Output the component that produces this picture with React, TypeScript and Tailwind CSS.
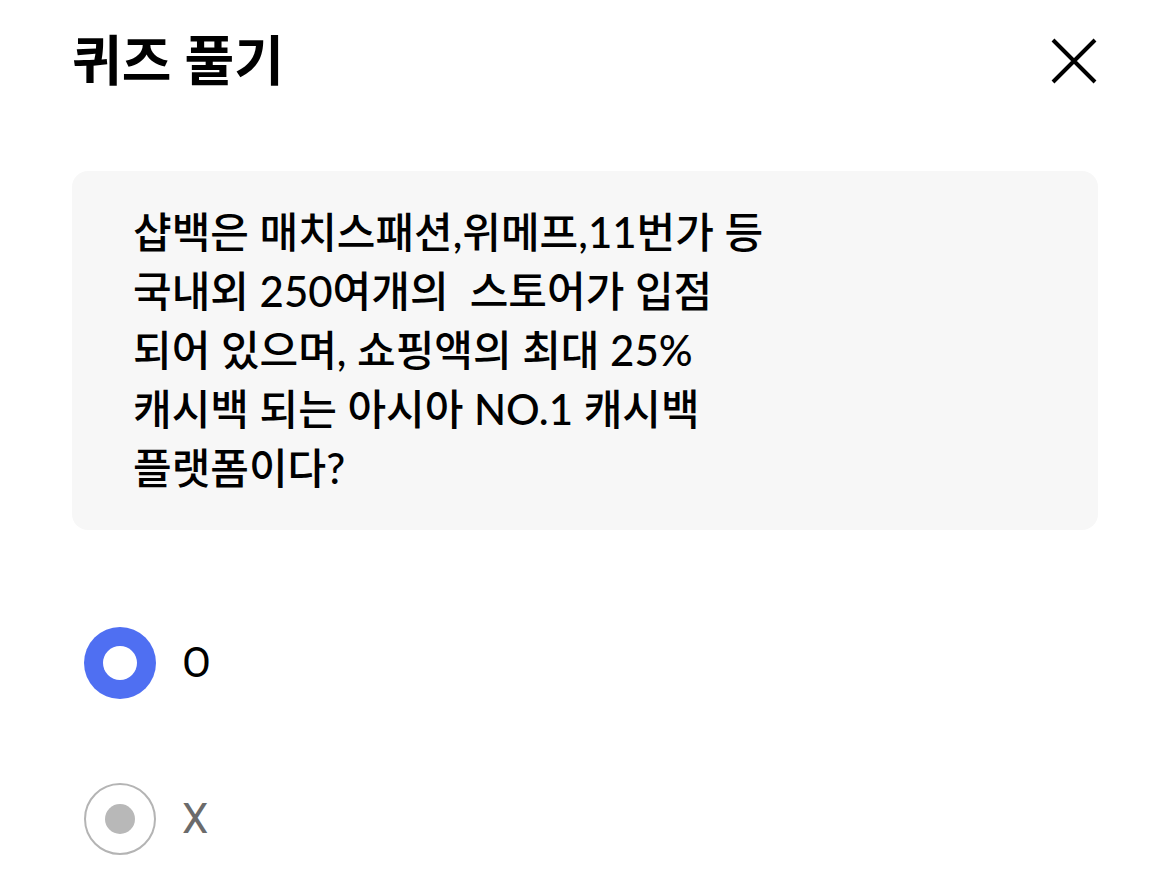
import React, { useState } from "react";

/* ---------------------------------------------------------
 * 퀴즈 풀기 – 문제 한 개와 O/X 선택지
 * --------------------------------------------------------- */
const QUESTION = [
  "샵백은 매치스패션,위메프,11번가 등",
  "국내외 250여개의  스토어가 입점",
  "되어 있으며, 쇼핑액의 최대 25%",
  "캐시백 되는 아시아 NO.1 캐시백",
  "플랫폼이다?",
];

const OPTIONS = ["O", "X"];

function CloseIcon() {
  return (
    <svg width="46" height="46" viewBox="0 0 46 46" fill="none" aria-hidden>
      <path d="M2 2L44 44M44 2L2 44" stroke="#000" strokeWidth="4" />
    </svg>
  );
}

type RadioProps = {
  label: string;
  checked: boolean;
  onSelect: () => void;
};

function RadioRow({ label, checked, onSelect }: RadioProps) {
  return (
    <button
      type="button"
      onClick={onSelect}
      className="flex items-center gap-[26px] h-[72px] text-left"
      role="radio"
      aria-checked={checked}
    >
      {checked ? (
        <span className="w-[72px] h-[72px] rounded-full bg-[#4f6ff2] flex items-center justify-center shrink-0">
          <span className="w-[34px] h-[34px] rounded-full bg-white" />
        </span>
      ) : (
        <span className="w-[72px] h-[72px] rounded-full border-2 border-[#b4b4b4] flex items-center justify-center shrink-0">
          <span className="w-[30px] h-[30px] rounded-full bg-[#b8b8b8]" />
        </span>
      )}
      <span
        className={`text-[42px] leading-none font-['Roboto',sans-serif] ${
          checked ? "text-black" : "text-[#6b6b6b]"
        }`}
      >
        {label}
      </span>
    </button>
  );
}

export default function App() {
  const [selected, setSelected] = useState(0);

  return (
    <div className="w-[1170px] h-[879px] bg-white overflow-hidden font-['Lato','Noto_Sans_CJK_KR',sans-serif]">
      {/* ----- HEADER ----- */}
      <div className="h-[122px] pl-[72px] pr-[73px] flex items-center justify-between">
        <h1 className="text-[54px] font-bold text-black leading-none">퀴즈 풀기</h1>
        <button type="button" aria-label="닫기" className="w-[46px] h-[46px]">
          <CloseIcon />
        </button>
      </div>

      {/* ----- QUESTION ----- */}
      <div className="mt-[49px] mx-[72px] rounded-2xl bg-[#f7f7f7] pl-[61px] py-8">
        {QUESTION.map((line, i) => (
          <p key={i} className="text-[42px] leading-[59px] font-medium text-black whitespace-pre">
            {line}
          </p>
        ))}
      </div>

      {/* ----- OPTIONS ----- */}
      <div className="mt-[97px] pl-[84px] flex flex-col gap-[84px]" role="radiogroup">
        {OPTIONS.map((opt, i) => (
          <RadioRow key={opt} label={opt} checked={selected === i} onSelect={() => setSelected(i)} />
        ))}
      </div>
    </div>
  );
}
